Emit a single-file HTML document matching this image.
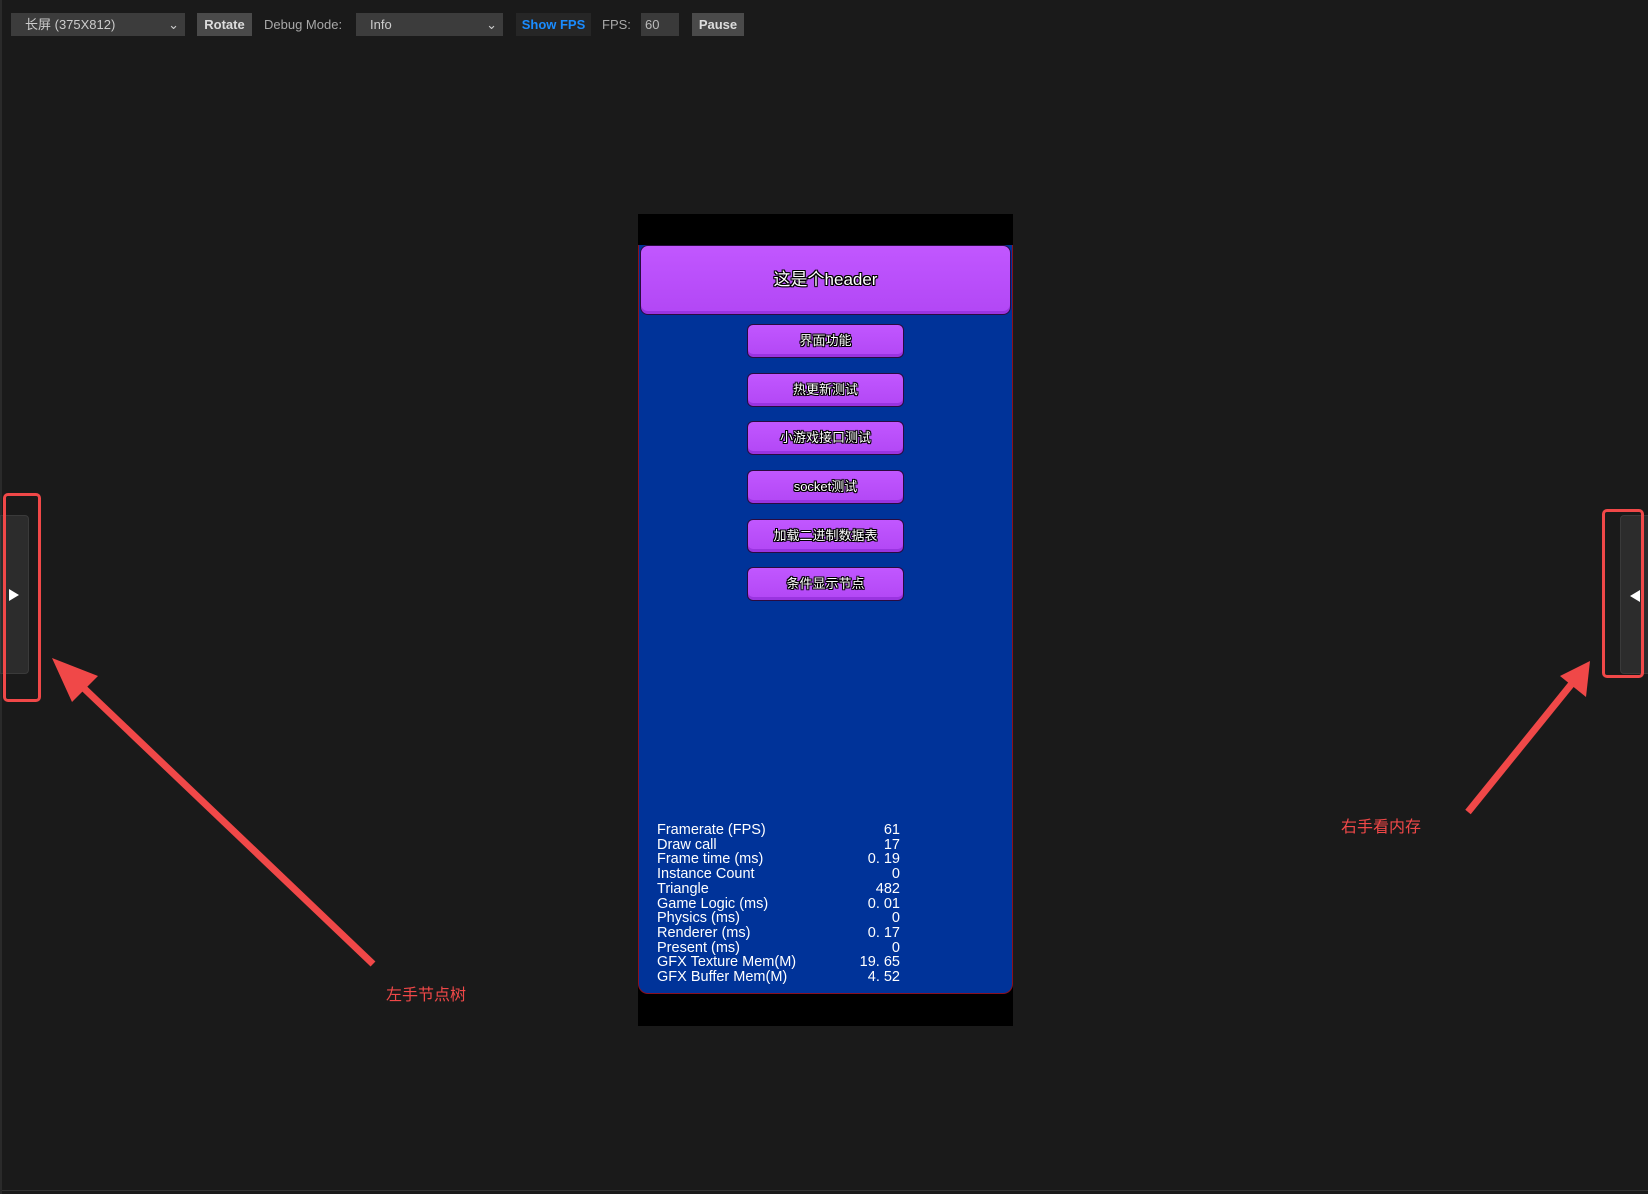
<!DOCTYPE html>
<html><head><meta charset="utf-8"><style>
*{margin:0;padding:0;box-sizing:border-box}
body{width:1648px;height:1194px;background:#1a1a1a;position:relative;overflow:hidden;font-family:"Liberation Sans","Noto Sans CJK SC",sans-serif}
.a{position:absolute}
.sel{background:#3c3c3c;color:#ccc;font-size:13px;line-height:23px;padding-left:14px;top:13px;height:23px}
.btn{background:#4a4a4a;color:#ddd;font-size:13px;font-weight:bold;line-height:23px;text-align:center;top:13px;height:23px}
.lbl{color:#a8a8a8;font-size:13px;top:17px}
.pb{background:linear-gradient(#c157ff,#b247f5);border:1px solid #2a0a40;border-radius:6px;box-shadow:inset 0 -3px 0 #9a34e0;color:#fff;text-align:center;font-size:13px;text-shadow:1px 1px 0 #000,-1px -1px 0 #000,1px -1px 0 #000,-1px 1px 0 #000,0 1px 0 #000,0 -1px 0 #000,1px 0 0 #000,-1px 0 0 #000}
.st{color:#fff;font-size:14.5px;line-height:14.7px}
</style></head><body>
<div class="a" style="left:0;top:0;width:2px;height:1194px;background:#2a2a2a"></div>
<div class="a" style="left:2px;top:1190px;width:1646px;height:1px;background:#333"></div>
<div class="a sel" style="left:11px;width:174px">长屏 (375X812)<span class="a" style="right:6px;top:0">⌄</span></div>
<div class="a btn" style="left:197px;width:55px">Rotate</div>
<div class="a lbl" style="left:264px">Debug Mode:</div>
<div class="a sel" style="left:356px;width:147px">Info<span class="a" style="right:6px;top:0">⌄</span></div>
<div class="a btn" style="left:516px;width:75px;background:#262626;color:#1a8cff">Show FPS</div>
<div class="a lbl" style="left:602px">FPS:</div>
<div class="a" style="left:641px;top:13px;width:38px;height:23px;background:#3a3a3a;color:#bbb;font-size:13px;line-height:23px;padding-left:4px">60</div>
<div class="a btn" style="left:692px;width:52px">Pause</div>

<div class="a" style="left:638px;top:214px;width:375px;height:812px;background:#000"></div>
<div class="a" style="left:638px;top:245px;width:375px;height:749px;background:#003399;border:1px solid #8a1020;border-top:none;border-radius:0 0 10px 10px"></div>
<div class="a pb" style="left:640px;top:245px;width:371px;height:70px;border-radius:8px;font-size:17px;line-height:68px">这是个header</div>
<div class="a pb" style="left:747px;top:324px;width:157px;height:34px;line-height:32px">界面功能</div>
<div class="a pb" style="left:747px;top:373px;width:157px;height:34px;line-height:32px">热更新测试</div>
<div class="a pb" style="left:747px;top:421px;width:157px;height:34px;line-height:32px">小游戏接口测试</div>
<div class="a pb" style="left:747px;top:470px;width:157px;height:34px;line-height:32px">socket测试</div>
<div class="a pb" style="left:747px;top:519px;width:157px;height:34px;line-height:32px">加载二进制数据表</div>
<div class="a pb" style="left:747px;top:567px;width:157px;height:34px;line-height:32px">条件显示节点</div>

<div class="a st" style="left:657px;top:823px">Framerate (FPS)<br>Draw call<br>Frame time (ms)<br>Instance Count<br>Triangle<br>Game Logic (ms)<br>Physics (ms)<br>Renderer (ms)<br>Present (ms)<br>GFX Texture Mem(M)<br>GFX Buffer Mem(M)</div>
<div class="a st" style="left:800px;width:100px;top:823px;text-align:right">61<br>17<br>0. 19<br>0<br>482<br>0. 01<br>0<br>0. 17<br>0<br>19. 65<br>4. 52</div>

<div class="a" style="left:0;top:515px;width:29px;height:159px;background:#2c2c2c;border:1px solid #3a3a3a;border-radius:0 4px 4px 0"></div>
<div class="a" style="left:9px;top:589px;width:0;height:0;border-left:10px solid #fff;border-top:6px solid transparent;border-bottom:6px solid transparent"></div>
<div class="a" style="left:3px;top:493px;width:38px;height:209px;border:3px solid #f04848;border-radius:5px"></div>

<div class="a" style="left:1620px;top:515px;width:30px;height:159px;background:#2c2c2c;border:1px solid #3a3a3a;border-radius:4px 0 0 4px"></div>
<div class="a" style="left:1630px;top:590px;width:0;height:0;border-right:10px solid #fff;border-top:6px solid transparent;border-bottom:6px solid transparent"></div>
<div class="a" style="left:1602px;top:509px;width:42px;height:169px;border:3px solid #f04848;border-radius:5px"></div>

<svg class="a" style="left:0;top:0" width="1648" height="1194">
<line x1="373" y1="964" x2="70" y2="675" stroke="#f04848" stroke-width="7"/>
<polygon points="52,658 98,676 72,702" fill="#f04848"/>
<line x1="1468" y1="812" x2="1578" y2="676" stroke="#f04848" stroke-width="7"/>
<polygon points="1590,661 1560,676 1586,697" fill="#f04848"/>
</svg>
<div class="a" style="left:386px;top:981px;color:#f04848;font-size:16px">左手节点树</div>
<div class="a" style="left:1341px;top:813px;color:#f04848;font-size:16px">右手看内存</div>
</body></html>
